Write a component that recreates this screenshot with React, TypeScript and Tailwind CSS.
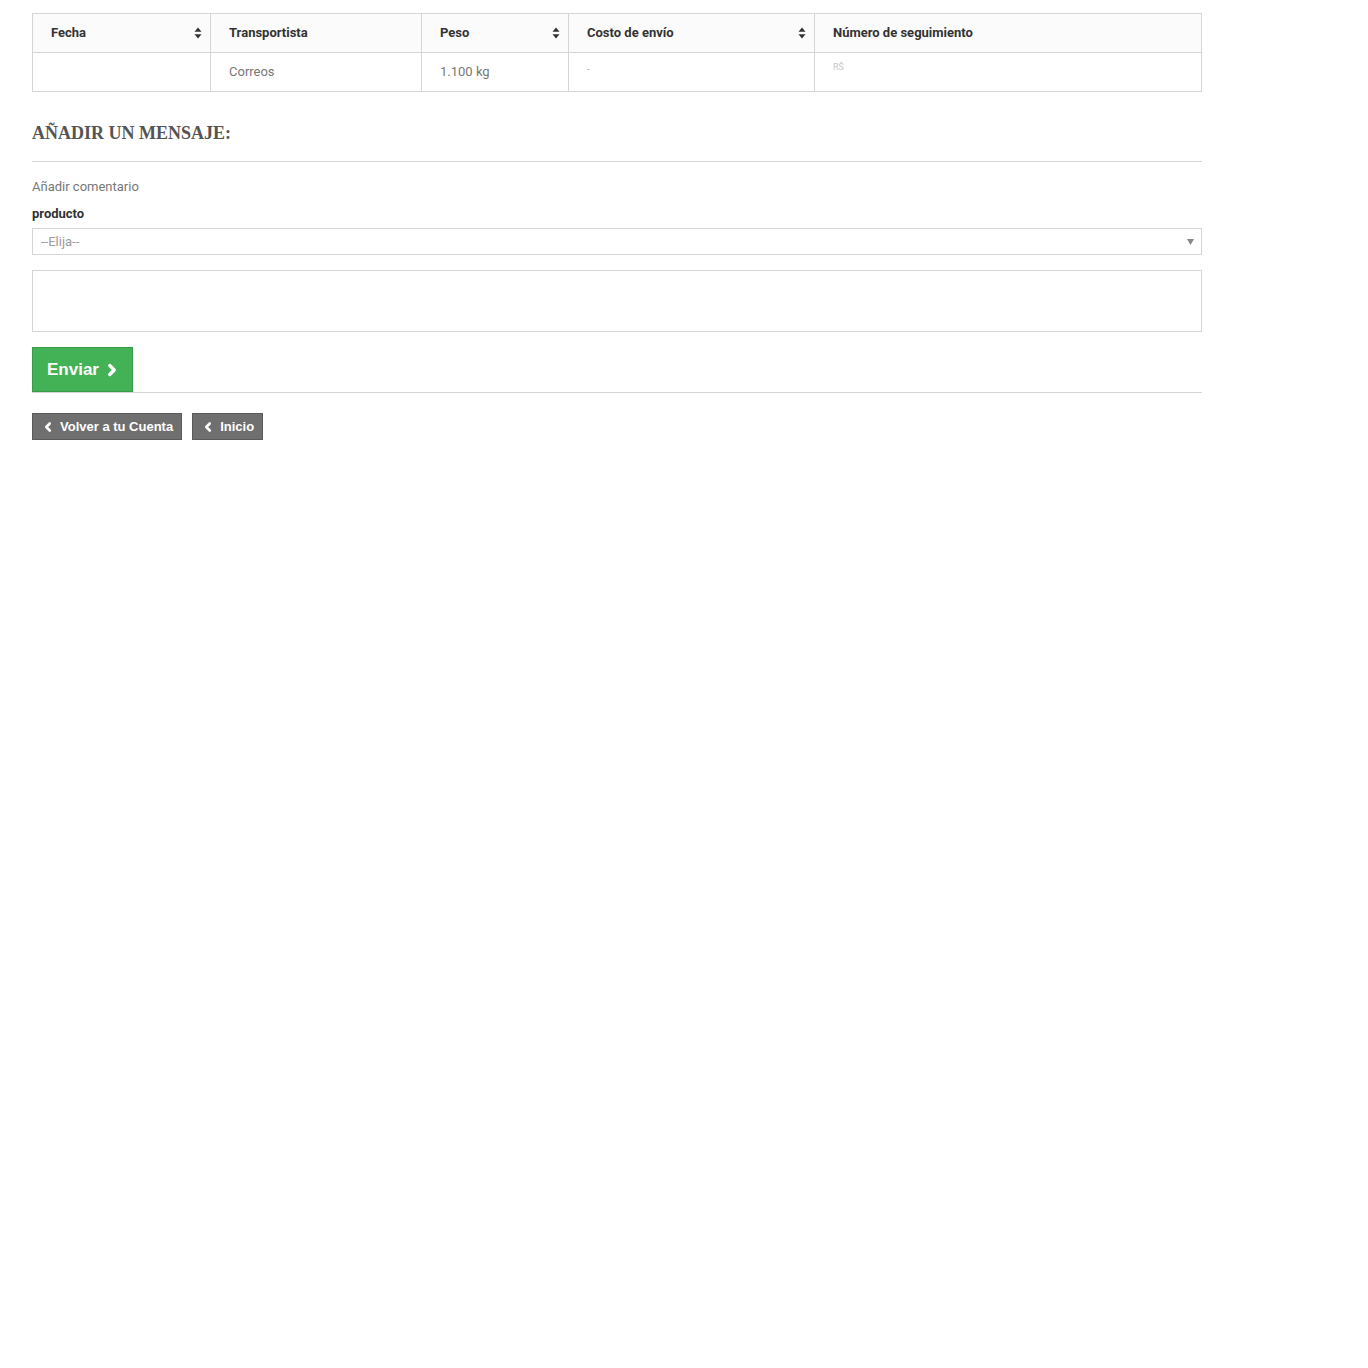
import { ChevronLeft, ChevronRight } from 'lucide-react';

function SortIcon() {
  return (
    <svg width="8" height="12" viewBox="0 0 8 12" className="shrink-0">
      <path d="M4 0.5 L7.5 4.8 H0.5 Z" fill="#333" />
      <path d="M4 11.5 L7.5 7.2 H0.5 Z" fill="#333" />
    </svg>
  );
}

export default function App() {
  const cols = [
    { label: 'Fecha', w: 'w-[178px]', sort: true },
    { label: 'Transportista', w: 'w-[211px]', sort: false },
    { label: 'Peso', w: 'w-[147px]', sort: true },
    { label: 'Costo de envío', w: 'w-[246px]', sort: true },
    { label: 'Número de seguimiento', w: 'flex-1', sort: false },
  ];
  const values = ['', 'Correos', '1.100 kg', '-', ''];

  return (
    <div className="min-h-screen bg-white pt-[13px] pl-[32px]" style={{ fontFamily: 'Roboto, "Liberation Sans", sans-serif' }}>
      <div className="w-[1170px]">
        {/* Shipping table */}
        <div className="border border-[#d6d4d4]">
          <div className="flex h-[39px] bg-[#fbfbfb] border-b border-[#d6d4d4]">
            {cols.map((c, i) => (
              <div
                key={c.label}
                className={`${c.w} flex items-center justify-between pl-[18px] pr-[8px] text-[13px] font-bold text-[#333] ${i < cols.length - 1 ? 'border-r border-[#d6d4d4]' : ''}`}
              >
                <span>{c.label}</span>
                {c.sort && <SortIcon />}
              </div>
            ))}
          </div>
          <div className="flex h-[38px]">
            {cols.map((c, i) => (
              <div
                key={c.label}
                className={`${c.w} flex items-center pl-[18px] text-[13px] text-[#777] ${i < cols.length - 1 ? 'border-r border-[#d6d4d4]' : ''}`}
              >
                {i === 4 ? (
                  <span className="text-[9px] leading-[10px] text-[#c8c8c8] -mt-[10px]">RŜ</span>
                ) : (
                  <span className={i === 3 ? 'text-[10px] text-[#aaa] -mt-[6px]' : ''}>{values[i]}</span>
                )}
              </div>
            ))}
          </div>
        </div>

        {/* Message form */}
        <h3
          className="mt-[29px] text-[18px] font-bold uppercase text-[#555454] leading-[24px]"
          style={{ fontFamily: '"Liberation Serif", "DejaVu Serif", serif' }}
        >
          Añadir un mensaje:
        </h3>
        <div className="mt-[16px] border-t border-[#d6d4d4]" />
        <p className="mt-[16px] text-[13px] text-[#777] leading-[18px]">Añadir comentario</p>
        <label className="block mt-[9px] text-[13px] font-bold text-[#333] leading-[18px]">producto</label>
        <div className="mt-[5px] h-[27px] border border-[#d6d4d4] flex items-center justify-between pl-[8px] pr-[7px]">
          <span className="text-[13px] text-[#9c9b9b]">--Elija--</span>
          <svg width="7" height="6" viewBox="0 0 7 6">
            <path d="M0 0 H7 L3.5 6 Z" fill="#888" />
          </svg>
        </div>
        <div className="mt-[15px] h-[62px] border border-[#d6d4d4]" />

        <button
          className="mt-[15px] h-[45px] pl-[14px] pr-[11px] flex items-center gap-[4px] bg-[#43b155] border border-[#399a49] text-white text-[17px] font-bold"
          style={{ fontFamily: '"Liberation Sans", Arial, sans-serif' }}
        >
          Enviar
          <ChevronRight size={18} strokeWidth={4.5} />
        </button>
        <div className="border-t border-[#d6d4d4]" />

        <div className="mt-[20px] flex gap-[10px]" style={{ fontFamily: '"Liberation Sans", Arial, sans-serif' }}>
          <button className="h-[27px] px-[8px] flex items-center gap-[5px] bg-[#6f6f6f] border border-[#5a5a5a] text-white text-[13px] font-bold">
            <ChevronLeft size={14} strokeWidth={4.5} />
            Volver a tu Cuenta
          </button>
          <button className="h-[27px] px-[8px] flex items-center gap-[5px] bg-[#6f6f6f] border border-[#5a5a5a] text-white text-[13px] font-bold">
            <ChevronLeft size={14} strokeWidth={4.5} />
            Inicio
          </button>
        </div>
      </div>
    </div>
  );
}
